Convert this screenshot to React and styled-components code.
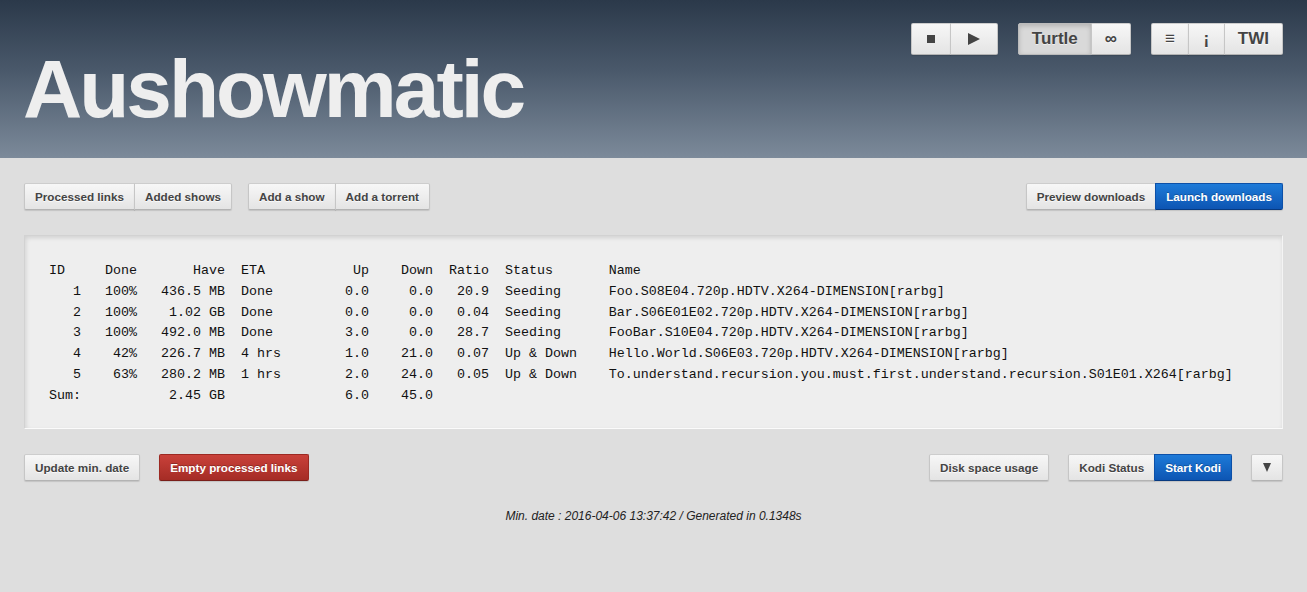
import React from 'react'
import styled, { createGlobalStyle, css } from 'styled-components'

const GlobalStyle = createGlobalStyle`
  html, body {
    margin: 0;
    padding: 0;
    background: #dedede;
    font-family: "Liberation Sans", Arial, sans-serif;
  }
`

const torrents = [
  { id: 1, done: '100%', have: '436.5 MB', eta: 'Done', up: 0, down: 0, ratio: '20.9', status: 'Seeding', name: 'Foo.S08E04.720p.HDTV.X264-DIMENSION[rarbg]' },
  { id: 2, done: '100%', have: '1.02 GB', eta: 'Done', up: 0, down: 0, ratio: '0.04', status: 'Seeding', name: 'Bar.S06E01E02.720p.HDTV.X264-DIMENSION[rarbg]' },
  { id: 3, done: '100%', have: '492.0 MB', eta: 'Done', up: 3, down: 0, ratio: '28.7', status: 'Seeding', name: 'FooBar.S10E04.720p.HDTV.X264-DIMENSION[rarbg]' },
  { id: 4, done: '42%', have: '226.7 MB', eta: '4 hrs', up: 1, down: 21, ratio: '0.07', status: 'Up & Down', name: 'Hello.World.S06E03.720p.HDTV.X264-DIMENSION[rarbg]' },
  { id: 5, done: '63%', have: '280.2 MB', eta: '1 hrs', up: 2, down: 24, ratio: '0.05', status: 'Up & Down', name: 'To.understand.recursion.you.must.first.understand.recursion.S01E01.X264[rarbg]' },
]

const L = (s, n) => String(s).padEnd(n)
const R = (s, n) => String(s).padStart(n)

// transmission-remote -l style listing
function listing() {
  const lines = []
  lines.push(`${L('ID', 4)}   ${L('Done', 4)}  ${R('Have', 9)}  ${L('ETA', 8)}  ${R('Up', 6)}  ${R('Down', 6)}  ${L('Ratio', 5)}  ${L('Status', 11)}  Name`)
  torrents.forEach(t => {
    lines.push(`${R(t.id, 4)}   ${R(t.done, 4)}  ${R(t.have, 9)}  ${L(t.eta, 8)}  ${R(t.up.toFixed(1), 6)}  ${R(t.down.toFixed(1), 6)}  ${R(t.ratio, 5)}  ${L(t.status, 11)}  ${t.name}`)
  })
  lines.push(`Sum:         ${R('2.45 GB', 9)}            ${R('6.0', 6)}  ${R('45.0', 6)}`)
  return lines.join('\n')
}

function App() {
  return (
    <>
      <GlobalStyle />
      <Header>
        <Title>Aushowmatic</Title>
        <Toolbar>
          <Group>
            <Button big><Square /></Button>
            <Button big><Play /></Button>
          </Group>
          <Group>
            <Button big variant="active">Turtle</Button>
            <Button big>∞</Button>
          </Group>
          <Group>
            <Button big>≡</Button>
            <Button big>¡</Button>
            <Button big>TWI</Button>
          </Group>
        </Toolbar>
      </Header>

      <Main>
        <Row>
          <Side>
            <Group>
              <Button>Processed links</Button>
              <Button>Added shows</Button>
            </Group>
            <Group>
              <Button>Add a show</Button>
              <Button>Add a torrent</Button>
            </Group>
          </Side>
          <Group>
            <Button>Preview downloads</Button>
            <Button variant="primary">Launch downloads</Button>
          </Group>
        </Row>

        <Output>{listing()}</Output>

        <Row>
          <Side gap={19}>
            <Button>Update min. date</Button>
            <Button variant="danger">Empty processed links</Button>
          </Side>
          <Side gap={19}>
            <Button>Disk space usage</Button>
            <Group>
              <Button>Kodi Status</Button>
              <Button variant="primary">Start Kodi</Button>
            </Group>
            <Button wide><Caret /></Button>
          </Side>
        </Row>

        <Footer>Min. date : 2016-04-06 13:37:42 / Generated in 0.1348s</Footer>
      </Main>
    </>
  )
}

const Header = styled.header`
  height: 158px;
  box-sizing: border-box;
  padding: 0 24px;
  display: flex;
  justify-content: space-between;
  align-items: flex-start;
  background: linear-gradient(to bottom, #2b394a 0%, #4a596b 45%, #7c8a9a 100%);
`

const Title = styled.h1`
  margin: 39px 0 0 -1px;
  font-family: "Liberation Sans", Arial, sans-serif;
  font-size: 82px;
  font-weight: bold;
  letter-spacing: -3px;
  line-height: 100px;
  color: #eeeeee;
`

const Toolbar = styled.div`
  display: flex;
  gap: 20px;
  margin-top: 23px;
`

const Group = styled.div`
  display: flex;

  & > button {
    border-radius: 0;
  }
  & > button + button {
    margin-left: -1px;
  }
  & > button:first-child {
    border-radius: 2px 0 0 2px;
  }
  & > button:last-child {
    border-radius: 0 2px 2px 0;
  }
`

const variants = {
  default: css`
    color: #444;
    text-shadow: 0 1px 0 rgba(255, 255, 255, 0.8);
    background: linear-gradient(to bottom, #f7f7f7, #e4e4e4);
    border-color: #cdcdcd #c6c6c6 #b3b3b3;
  `,
  active: css`
    color: #444;
    text-shadow: 0 1px 0 rgba(255, 255, 255, 0.6);
    background: #d9d9d9;
    border-color: #bbb;
    box-shadow: inset 0 2px 5px rgba(0, 0, 0, 0.18);
  `,
  primary: css`
    color: #fff;
    text-shadow: 0 -1px 0 rgba(0, 0, 0, 0.25);
    background: linear-gradient(to bottom, #1d7ad8, #0d55b3);
    border-color: #0c50a8 #0c50a8 #083a80;
  `,
  danger: css`
    color: #fff;
    text-shadow: 0 -1px 0 rgba(0, 0, 0, 0.25);
    background: linear-gradient(to bottom, #c9413a, #a52c25);
    border-color: #9c2922 #9c2922 #7a1f1a;
  `,
}

const Button = styled.button`
  box-sizing: border-box;
  height: ${p => (p.big ? '32px' : '27px')};
  padding: 0 ${p => (p.big ? '13px' : p.wide ? '11px' : '10px')};
  min-width: ${p => (p.big ? '37px' : 'auto')};
  font-family: "Liberation Sans", Arial, sans-serif;
  font-size: ${p => (p.big ? '17px' : '11.7px')};
  font-weight: bold;
  border: 1px solid;
  border-radius: 2px;
  box-shadow: 0 1px 1px rgba(0, 0, 0, 0.12);
  display: inline-flex;
  align-items: center;
  justify-content: center;
  cursor: pointer;
  ${p => variants[p.variant || 'default']}
`

const Square = styled.span`
  display: block;
  width: 8px;
  height: 8px;
  margin: 0 2px;
  background: #444;
`

const Play = styled.span`
  display: block;
  width: 0;
  height: 0;
  margin: 0 4px;
  border-top: 6px solid transparent;
  border-bottom: 6px solid transparent;
  border-left: 12px solid #444;
`

const Caret = styled.span`
  display: block;
  width: 0;
  height: 0;
  border-left: 4px solid transparent;
  border-right: 4px solid transparent;
  border-top: 9px solid #444;
`

const Main = styled.main`
  padding: 25px 24px 0;
  display: flex;
  flex-direction: column;
  gap: 25px;
`

const Row = styled.div`
  display: flex;
  justify-content: space-between;
  align-items: center;
`

const Side = styled.div`
  display: flex;
  align-items: center;
  gap: ${p => p.gap || 16}px;
`

const Output = styled.pre`
  margin: 0;
  padding: 25px 24px 21px;
  background: #eeeeee;
  border: 1px solid #d2d2d2;
  border-bottom-color: #fbfbfb;
  border-right-color: #f4f4f4;
  box-shadow: inset 1px 2px 4px rgba(0, 0, 0, 0.12);
  font-family: "Liberation Mono", "Courier New", monospace;
  font-size: 13.33px;
  line-height: 20.8px;
  color: #111;
`

const Footer = styled.p`
  margin: 3px 0 0;
  text-align: center;
  font-family: "Liberation Sans", Arial, sans-serif;
  font-size: 12px;
  font-style: italic;
  color: #222;
`

export default App
